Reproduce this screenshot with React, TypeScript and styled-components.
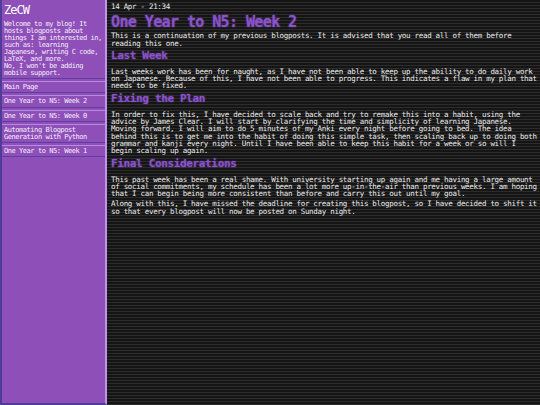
import React from 'react';
import styled, { createGlobalStyle } from 'styled-components';

const GlobalStyle = createGlobalStyle`
    html, body {
        margin: 0;
        padding: 0;
        background: #1b1b1b;
    }
    body {
        font-family: "DejaVu Sans Mono", "Liberation Mono", monospace;
    }
`;

const Page = styled.div`
    display: grid;
    grid-template-columns: 107px 1fr;
    width: 540px;
    height: 405px;
    overflow: hidden;
    background: repeating-linear-gradient(
        to bottom,
        #151515 0px,
        #151515 2px,
        #2c2c2c 2px,
        #2c2c2c 3px
    );
`;

const Sidebar = styled.aside`
    display: flex;
    flex-direction: column;
    gap: 2px;
    box-sizing: border-box;
    height: 405px;
    background: #8e4fb9;
    border-left: 2px solid #4f3b98;
    border-right: 2px solid #c393ec;
    border-bottom: 2px solid #4f3b98;
`;

const Box = styled.div`
    box-sizing: border-box;
    padding: 2px 2px;
    border-top: 1px solid #b98ae3;
    border-bottom: 1px solid #5e3f9f;
    background: #8e4fb9;
    color: #f4eefa;
    font-size: 7px;
    letter-spacing: -0.45px;
    line-height: 7px;
    white-space: pre;
`;

const Intro = styled(Box)`
    border-top: none;
    padding-top: 3px;
    padding-bottom: 1px;
`;

const SiteTitle = styled.div`
    font-size: 12px;
    line-height: 14px;
    letter-spacing: -1px;
    color: #ffffff;
    margin-bottom: 4px;
`;

const NavLink = styled(Box)`
    padding: 2px 2px 1.5px 2px;
    line-height: 6.8px;
    cursor: pointer;
`;

const Main = styled.main`
    padding: 3px 4px;
    color: #eaeaea;
    font-size: 7.5px;
    letter-spacing: -0.3px;
    line-height: 7.3px;
`;

const Stamp = styled.div`
    margin-bottom: 4px;
`;

const Title = styled.h1<{ $size?: 'big' | 'small' }>`
    margin: ${p => (p.$size === 'big' ? '0 0 2px 0' : '3px 0 6px 0')};
    font-weight: bold;
    color: #8b52cc;
    text-shadow: 0 0 2px rgba(150, 90, 220, 0.6);
    font-size: ${p => (p.$size === 'big' ? '15px' : '11px')};
    letter-spacing: ${p => (p.$size === 'big' ? '-0.6px' : '-0.35px')};
    line-height: ${p => (p.$size === 'big' ? '16px' : '12px')};
`;

const Para = styled.p`
    margin: 0 0 3px 0;
    white-space: pre;
`;

const navItems = [
    'Main Page',
    'One Year to N5: Week 2',
    'One Year to N5: Week 0',
    'Automating Blogpost\nGeneration with Python',
    'One Year to N5: Week 1'
];

const App = () => {
    return (
        <>
            <GlobalStyle />
            <Page>
                <Sidebar>
                    <Intro>
                        <SiteTitle>ZeCW</SiteTitle>
                        {`Welcome to my blog! It
hosts blogposts about
things I am interested in,
such as: learning
Japanese, writing C code,
LaTeX, and more.
No, I won't be adding
mobile support.`}
                    </Intro>
                    {navItems.map(item => (
                        <NavLink key={item}>{item}</NavLink>
                    ))}
                </Sidebar>
                <Main>
                    <Stamp>14 Apr - 21:34</Stamp>
                    <Title $size="big">One Year to N5: Week 2</Title>
                    <Para>{`This is a continuation of my previous blogposts. It is advised that you read all of them before
reading this one.`}</Para>
                    <Title>Last Week</Title>
                    <Para>{`Last weeks work has been for naught, as I have not been able to keep up the ability to do daily work
on Japanese. Because of this, I have not been able to progress. This indicates a flaw in my plan that
needs to be fixed.`}</Para>
                    <Title>Fixing the Plan</Title>
                    <Para>{`In order to fix this, I have decided to scale back and try to remake this into a habit, using the
advice by James Clear. I will start by clarifying the time and simplicity of learning Japanese.
Moving forward, I will aim to do 5 minutes of my Anki every night before going to bed. The idea
behind this is to get me into the habit of doing this simple task, then scaling back up to doing both
grammar and kanji every night. Until I have been able to keep this habit for a week or so will I
begin scaling up again.`}</Para>
                    <Title>Final Considerations</Title>
                    <Para>{`This past week has been a real shame. With university starting up again and me having a large amount
of social commitments, my schedule has been a lot more up-in-the-air than previous weeks. I am hoping
that I can begin being more consistent than before and carry this out until my goal.`}</Para>
                    <Para>{`Along with this, I have missed the deadline for creating this blogpost, so I have decided to shift it
so that every blogpost will now be posted on Sunday night.`}</Para>
                </Main>
            </Page>
        </>
    );
};

export default App;
